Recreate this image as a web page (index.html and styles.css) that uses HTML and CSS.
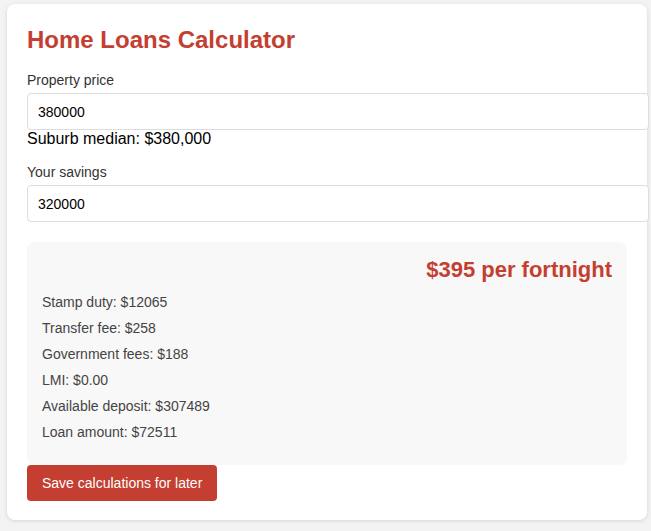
FILE: index.html
```html
<!DOCTYPE html>
<html>
<head>
<meta charset="utf-8">
<link rel="stylesheet" href="styles.css">
</head>
<body>
<div class="card">
  <h1 class="title">Home Loans Calculator</h1>
  <div class="field">
    <label class="label">Property price</label>
    <input class="input" type="text" value="380000">
    <div class="median">Suburb median: $380,000</div>
  </div>
  <div class="field field-last">
    <label class="label">Your savings</label>
    <input class="input" type="text" value="320000">
  </div>
  <div class="results">
    <div class="repay">$395 per fortnight</div>
    <div class="row">Stamp duty: $12065</div>
    <div class="row">Transfer fee: $258</div>
    <div class="row">Government fees: $188</div>
    <div class="row">LMI: $0.00</div>
    <div class="row">Available deposit: $307489</div>
    <div class="row">Loan amount: $72511</div>
  </div>
  <button class="save">Save calculations for later</button>
</div>
</body>
</html>
```
FILE: styles.css
```css
html, body {
  margin: 0;
  background: #f3f3f3;
}
body {
  padding: 4px 0 10px 7px;
  font-family: "Liberation Sans", Arial, sans-serif;
}
.card {
  width: 600px;
  background: #fff;
  border-radius: 8px;
  padding: 20px 20px 19px;
  box-shadow: 0 1px 4px rgba(0,0,0,0.12);
}
.title {
  margin: 0 0 18px;
  padding-top: 2px;
  font-size: 24px;
  line-height: 28px;
  font-weight: bold;
  color: #c43e31;
}
.field {
  margin-bottom: 16px;
}
.label {
  display: block;
  font-size: 14px;
  line-height: 16px;
  color: #333;
  margin-bottom: 5px;
}
.input {
  display: block;
  box-sizing: border-box;
  width: 622px;
  height: 37px;
  padding: 0 10px;
  margin: 0;
  border: 1px solid #ddd;
  border-radius: 4px;
  font-family: "Liberation Sans", Arial, sans-serif;
  font-size: 14px;
  color: #000;
  background: #fff;
}
.median {
  font-size: 16px;
  line-height: 18px;
  color: #000;
}
.field-last {
  margin-bottom: 20px;
}
.results {
  background: #f8f8f8;
  border-radius: 8px;
  padding: 15px 15px 15px;
}
.repay {
  text-align: right;
  font-size: 22px;
  line-height: 26px;
  font-weight: bold;
  color: #c43e31;
  margin-bottom: 11px;
}
.row {
  font-size: 14px;
  line-height: 16px;
  color: #444;
  margin-bottom: 10px;
}
.save {
  display: block;
  margin: 0;
  height: 36px;
  padding: 0 15px;
  border: none;
  border-radius: 4px;
  background: #c43e31;
  color: #fff;
  font-family: "Liberation Sans", Arial, sans-serif;
  font-size: 14px;
}
```
